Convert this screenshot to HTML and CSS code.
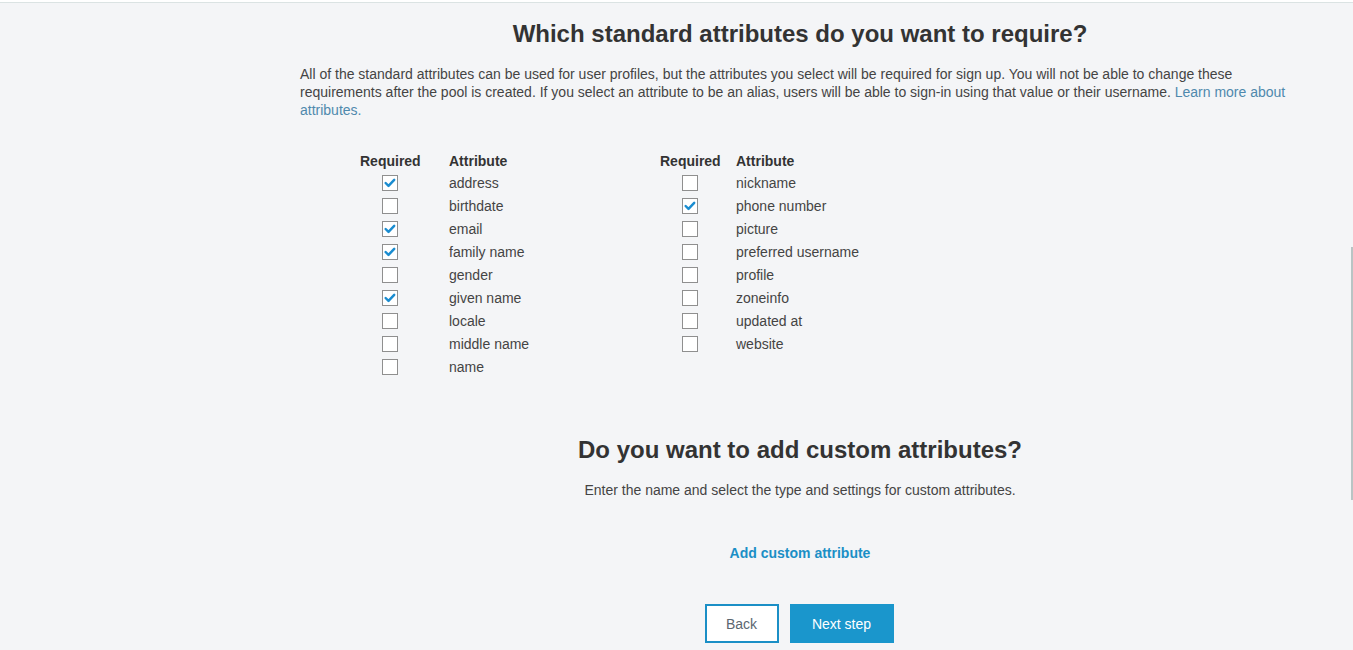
FILE: index.html
```html
<!DOCTYPE html>
<html>
<head>
<meta charset="utf-8">
<link rel="stylesheet" href="styles.css">
</head>
<body>
<div class="topbar"></div>
<main class="content">
  <h1 class="title">Which standard attributes do you want to require?</h1>
  <p class="intro">All of the standard attributes can be used for user profiles, but the attributes you select will be required for sign up. You will not be able to change these requirements after the pool is created. If you select an attribute to be an alias, users will be able to sign-in using that value or their username. <a class="muted-link" href="#">Learn more about attributes.</a></p>

  <div class="tables">
    <table class="attr-table left">
      <thead><tr><th class="col-req">Required</th><th>Attribute</th></tr></thead>
      <tbody>
        <tr><td class="col-req"><span class="cb on"><svg viewBox="0 0 16 16"><path d="M3 8 L6.3 11.3 L12.8 4.4"/></svg></span></td><td>address</td></tr>
        <tr><td class="col-req"><span class="cb"></span></td><td>birthdate</td></tr>
        <tr><td class="col-req"><span class="cb on"><svg viewBox="0 0 16 16"><path d="M3 8 L6.3 11.3 L12.8 4.4"/></svg></span></td><td>email</td></tr>
        <tr><td class="col-req"><span class="cb on"><svg viewBox="0 0 16 16"><path d="M3 8 L6.3 11.3 L12.8 4.4"/></svg></span></td><td>family name</td></tr>
        <tr><td class="col-req"><span class="cb"></span></td><td>gender</td></tr>
        <tr><td class="col-req"><span class="cb on"><svg viewBox="0 0 16 16"><path d="M3 8 L6.3 11.3 L12.8 4.4"/></svg></span></td><td>given name</td></tr>
        <tr><td class="col-req"><span class="cb"></span></td><td>locale</td></tr>
        <tr><td class="col-req"><span class="cb"></span></td><td>middle name</td></tr>
        <tr><td class="col-req"><span class="cb"></span></td><td>name</td></tr>
      </tbody>
    </table>
    <table class="attr-table right">
      <thead><tr><th class="col-req">Required</th><th>Attribute</th></tr></thead>
      <tbody>
        <tr><td class="col-req"><span class="cb"></span></td><td>nickname</td></tr>
        <tr><td class="col-req"><span class="cb on"><svg viewBox="0 0 16 16"><path d="M3 8 L6.3 11.3 L12.8 4.4"/></svg></span></td><td>phone number</td></tr>
        <tr><td class="col-req"><span class="cb"></span></td><td>picture</td></tr>
        <tr><td class="col-req"><span class="cb"></span></td><td>preferred username</td></tr>
        <tr><td class="col-req"><span class="cb"></span></td><td>profile</td></tr>
        <tr><td class="col-req"><span class="cb"></span></td><td>zoneinfo</td></tr>
        <tr><td class="col-req"><span class="cb"></span></td><td>updated at</td></tr>
        <tr><td class="col-req"><span class="cb"></span></td><td>website</td></tr>
      </tbody>
    </table>
  </div>

  <h2 class="title title-2">Do you want to add custom attributes?</h2>
  <p class="center-text">Enter the name and select the type and settings for custom attributes.</p>
  <div class="add-row"><a class="add-link" href="#">Add custom attribute</a></div>

  <div class="actions">
    <button class="btn btn-back">Back</button>
    <button class="btn btn-next">Next step</button>
  </div>
</main>
<div class="scroll-thumb"></div>
</body>
</html>
```
FILE: styles.css
```css
html, body {
  margin: 0;
  padding: 0;
}
body {
  background: #f4f5f7;
  font-family: "Liberation Sans", Arial, sans-serif;
  color: #444;
  font-size: 14px;
  height: 650px;
  overflow: hidden;
}
.topbar {
  height: 2px;
  background: #ffffff;
  border-bottom: 1px solid #dbe3e3;
}
.content {
  width: 1000px;
  margin-left: 300px;
}
.title {
  margin: 17px 0 0;
  font-size: 24px;
  line-height: 28px;
  font-weight: bold;
  color: #333;
  text-align: center;
}
.intro {
  margin: 17px 0 0;
  line-height: 18px;
  font-size: 14px;
  color: #444;
}
.muted-link {
  color: #4f89ad;
  text-decoration: none;
}
.tables {
  display: flex;
  align-items: flex-start;
  margin: 31px 0 0 60px;
}
.attr-table {
  border-collapse: collapse;
}
.attr-table.left {
  width: 300px;
}
.attr-table th {
  text-align: left;
  font-weight: bold;
  color: #333;
  height: 21px;
  padding: 0;
  vertical-align: middle;
}
.attr-table td {
  height: 23px;
  padding: 0;
  vertical-align: middle;
  color: #444;
}
.attr-table.left .col-req {
  width: 89px;
}
.attr-table.right .col-req {
  width: 76px;
}
.cb {
  display: block;
  width: 14px;
  height: 14px;
  margin-left: 22px;
  border: 1px solid #8f8f8f;
  background: #fff;
}
.cb svg {
  display: block;
  width: 14px;
  height: 14px;
}
.cb svg path {
  fill: none;
  stroke: #1a8cd0;
  stroke-width: 2.8;
  stroke-linecap: round;
  stroke-linejoin: round;
}
.title-2 {
  margin-top: 58px;
}
.center-text {
  margin: 17px 0 0;
  line-height: 18px;
  text-align: center;
}
.add-row {
  margin-top: 45px;
  line-height: 18px;
  text-align: center;
}
.add-link {
  color: #1b8fc6;
  font-weight: bold;
  text-decoration: none;
}
.actions {
  margin-top: 42px;
  padding-right: 2px;
  display: flex;
  justify-content: center;
  gap: 11px;
}
.btn {
  font-family: "Liberation Sans", Arial, sans-serif;
  font-size: 14px;
  height: 39px;
  padding: 0;
  cursor: pointer;
}
.btn-back {
  width: 74px;
  background: #fff;
  color: #5b6670;
  border: 2px solid #1b8fc6;
}
.btn-next {
  width: 104px;
  background: #1a96cc;
  color: #fff;
  border: none;
}
.scroll-thumb {
  position: absolute;
  right: 0;
  top: 247px;
  width: 2px;
  height: 253px;
  background: #b9c4c4;
}
```
